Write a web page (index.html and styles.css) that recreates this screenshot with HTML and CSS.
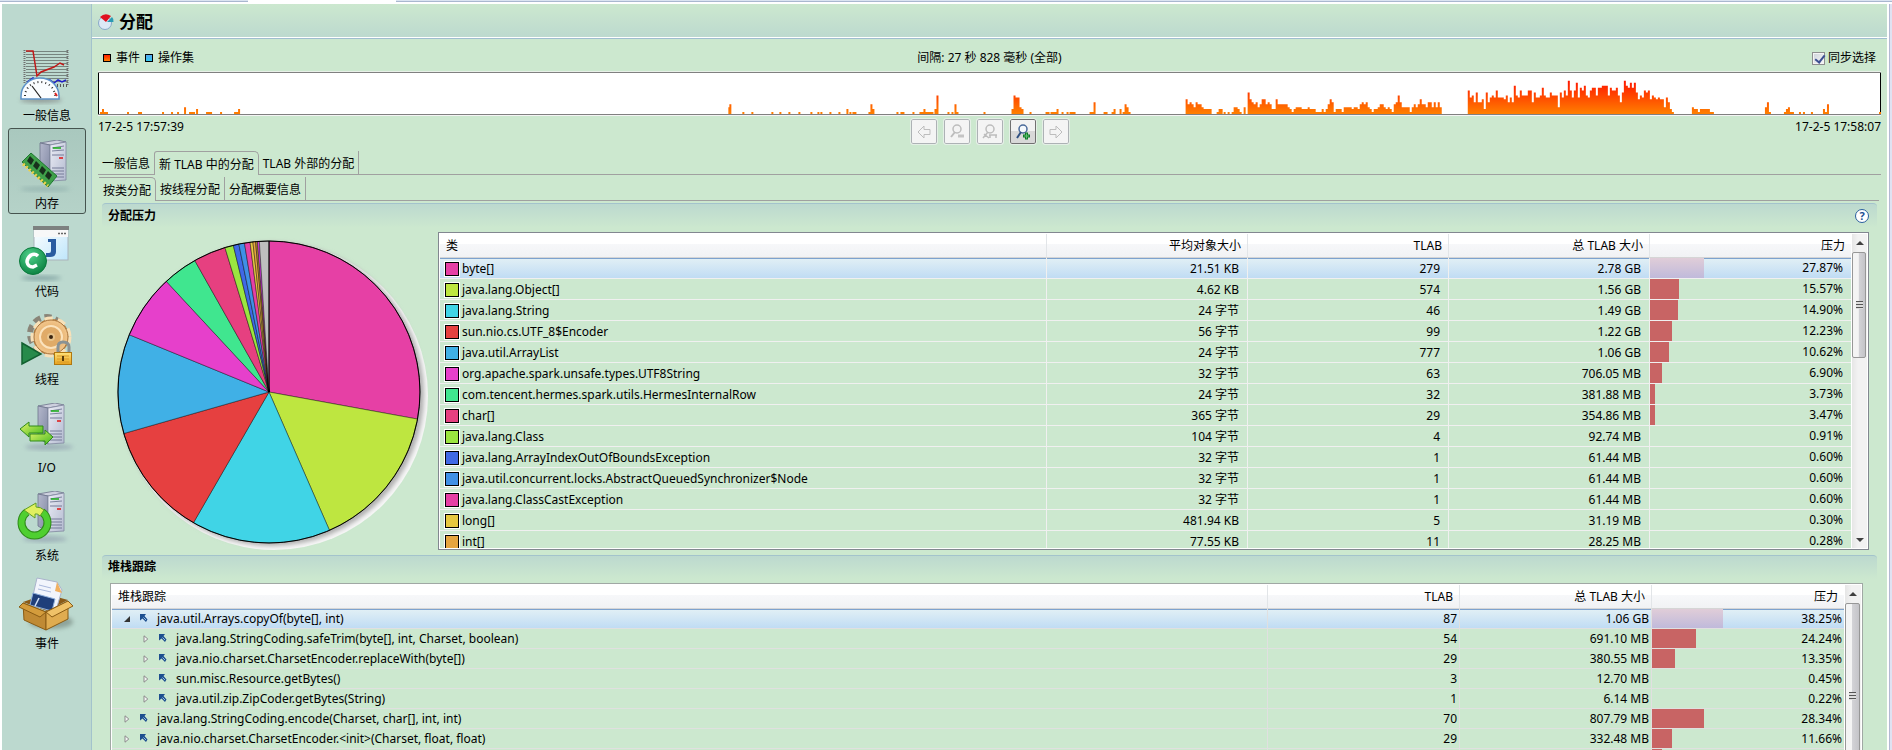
FILE: index.html
```html
<!DOCTYPE html>
<html lang="zh-CN">
<head>
    <meta charset="UTF-8">
    <meta name="viewport" content="width=device-width, initial-scale=1.0">
    <title>分配</title>
    <link rel="stylesheet" href="styles.css">
</head>
<body>

<!-- Shared icon parts -->
<svg class="defs" width="0" height="0" aria-hidden="true">
    <defs>
        <linearGradient id="side" x1="0" y1="0" x2="1" y2="1">
            <stop offset="0" stop-color="#b4b8cc"/><stop offset="1" stop-color="#7f86a2"/>
        </linearGradient>
        <linearGradient id="front" x1="0" y1="0" x2="1" y2="1">
            <stop offset="0" stop-color="#eceef6"/><stop offset="1" stop-color="#b3bad0"/>
        </linearGradient>
        <linearGradient id="lime" x1="0" y1="0" x2="1" y2="1">
            <stop offset="0" stop-color="#e4f56a"/><stop offset="1" stop-color="#3fb81e"/>
        </linearGradient>
        <radialGradient id="ball" cx="0.4" cy="0.3" r="0.8">
            <stop offset="0" stop-color="#4fd08a"/><stop offset="1" stop-color="#047a3a"/>
        </radialGradient>
        <linearGradient id="gold" x1="0" y1="0" x2="0" y2="1">
            <stop offset="0" stop-color="#ffe27a"/><stop offset="1" stop-color="#e8a21c"/>
        </linearGradient>
        <radialGradient id="gear" cx="0.5" cy="0.5" r="0.6">
            <stop offset="0" stop-color="#d99a50"/><stop offset="1" stop-color="#f7cf98"/>
        </radialGradient>
        <linearGradient id="sky" x1="0" y1="0" x2="1" y2="1">
            <stop offset="0" stop-color="#ffffff"/><stop offset="1" stop-color="#bfe6fb"/>
        </linearGradient>
        <filter id="soft" x="-30%" y="-30%" width="160%" height="160%"><feGaussianBlur stdDeviation="2"/></filter>
        <symbol id="server" viewBox="0 0 28 42">
            <path d="M1 3 L18 0 L27 2 L11 5 Z" fill="#cdd0de" stroke="#6d738c" stroke-width=".8"/>
            <path d="M1 3 L11 5 V41 L1 35 Z" fill="url(#side)" stroke="#6d738c" stroke-width=".8"/>
            <path d="M11 5 L27 2 V40 L11 41 Z" fill="url(#front)" stroke="#8288a0" stroke-width=".8"/>
            <path d="M13 8 L25 6 M13 11 L25 10" stroke="#7d849e"/>
            <path d="M14 8 h8" stroke="#22b022" stroke-width="1.6"/>
            <path d="M20 18 h4" stroke="#e02020" stroke-width="1.6"/>
            <path d="M13 15 h12 M13 28 h12 M13 31 h12 M13 34 h12 M13 37 h12" stroke="#747b98"/>
        </symbol>
        <symbol id="frame" viewBox="0 0 10 10">
            <path d="M1 0 H7 L5.500 2 L8.500 5.500 L7 8 L3.500 4.500 L1 6.500 Z" fill="#1d4f8f"/>
            <path d="M4.500 3.500 L7 6" stroke="#9fc0e4"/>
        </symbol>
        <symbol id="closed" viewBox="0 0 8 8">
            <path d="M2 .8 L5.8 4 L2 7.2 Z" fill="#f4f4f4" stroke="#8a8a8a"/>
        </symbol>
    </defs>
</svg>

<div class="top-strip"><div class="strip-left"></div><div class="strip-right"></div></div>

<div class="window">
    <nav class="sidebar">
        <button class="side-item">
            <svg width="56" height="56" viewBox="0 0 56 56">
                <path d="M7 1.5h42M7 4.5h42M7 7.500h42M7 10.500h42M7 13.500h42M7 16.500h42M7 19.500h42M7 22.500h42M7 25.500h42M7 28.500h42M7 31.500h42" stroke="#77857f"/>
                <path d="M48.500 0V36M5.500 0V34" stroke="#6f6f6f" stroke-width="2" stroke-dasharray="1 1"/>
                <path d="M32 35.500h16" stroke="#555" stroke-width="3" stroke-dasharray="1 2"/>
                <path d="M7 1 H14 L18 26 L22 22 L35 17 L41 13 L45 15" fill="none" stroke="#c01818" stroke-width="1.500"/>
                <path d="M8 32 L14 28 L19 31 L31 30 L35 33 L39 30 L43 32 L47 30" fill="none" stroke="#2020c8" stroke-width="1.500"/>
                <ellipse cx="22" cy="50" rx="21" ry="3" fill="#777" filter="url(#soft)" opacity=".6"/>
                <path d="M2 49 V46 A19 18 0 0 1 40 46 V49 Z" fill="#fafdff" stroke="#5d92c8" stroke-width="1.500"/>
                <path d="M6 46 A15 14 0 0 1 36 46" fill="none" stroke="#333" stroke-width="2" stroke-dasharray="1 3"/>
                <path d="M13 36 L22 48" stroke="#222" stroke-width="1.200"/>
                <path d="M36 43 L38 46" stroke="#d22" stroke-width="2"/>
            </svg>
            <span>一般信息</span>
        </button>
        <button class="side-item selected">
            <svg width="56" height="56" viewBox="0 0 56 56">
                <ellipse cx="26" cy="51" rx="25" ry="2" fill="#7fa0a0" filter="url(#soft)" opacity=".6"/>
                <use href="#server" x="20" y="2" width="28" height="42"/>
                <path d="M3 24 L12 15 L38 38 L29 49 Z" fill="#3fa04a" stroke="#1f7a30"/>
                <path d="M11 18l4 4-3 5-4-4zM17 23l4 4-3 5-4-4zM23 28l4 4-3 5-4-4zM29 33l4 4-3 5-4-4z" fill="#18301c"/>
                <path d="M4 26 L29 48" stroke="#ecd24a" stroke-width="3" stroke-dasharray="2 2"/>
            </svg>
            <span>内存</span>
        </button>
        <button class="side-item">
            <svg width="56" height="56" viewBox="0 0 56 56">
                <ellipse cx="22" cy="52" rx="20" ry="2" fill="#7fa0a0" filter="url(#soft)"/>
                <rect x="15" y="1" width="34" height="33" fill="url(#sky)" stroke="#a9b4bb"/>
                <rect x="14" y="0" width="36" height="4" fill="#7d8180"/>
                <rect x="15" y="4" width="34" height="7" fill="#f8f8f8"/>
                <path d="M39 7.500h8" stroke="#666" stroke-width="1.500" stroke-dasharray="2 1"/>
                <path d="M29 13 H37 V26 Q37 31 31 31 H27 V27 H30 Q32 27 32 25 V16 H29 Z" fill="#2a5ba0"/>
                <circle cx="14" cy="35" r="13.500" fill="url(#ball)" stroke="#0a7a3c"/>
                <path d="M19 30 Q16 27 12 29 Q8 32 8 36 Q9 41 14 41 L18 39" fill="none" stroke="#fff" stroke-width="3.500"/>
            </svg>
            <span>代码</span>
        </button>
        <button class="side-item">
            <svg width="56" height="56" viewBox="0 0 56 56">
                <circle cx="28" cy="20" r="17" fill="none" stroke="#8a8578" stroke-width="6" stroke-dasharray="7 4"/>
                <circle cx="32" cy="23" r="18" fill="#b98345" stroke="#f7e0b8" stroke-width="5" stroke-dasharray="8 5"/>
                <circle cx="32" cy="23" r="17" fill="url(#gear)" stroke="#a8733a"/>
                <circle cx="32" cy="23" r="11" fill="#e0ab68" stroke="#fbe3bd" stroke-width="2"/>
                <circle cx="32" cy="23" r="3" fill="#3a2410" stroke="#e8c48c" stroke-width="2"/>
                <path d="M3 29 L22 40 L3 50 Z" fill="#278a4a" stroke="#126030" stroke-width="1.500"/>
                <path d="M39 40 V33 Q39 28 44 28 Q50 28 50 33 V40" fill="none" stroke="#8a9294" stroke-width="3"/>
                <rect x="35.500" y="38.500" width="17" height="12" fill="url(#gold)" stroke="#b07810"/>
                <path d="M38 42h12M38 45h12M38 48h12" stroke="#d89a28"/>
                <path d="M44 42v5" stroke="#5a3c08" stroke-width="2"/>
            </svg>
            <span>线程</span>
        </button>
        <button class="side-item">
            <svg width="56" height="56" viewBox="0 0 56 56">
                <ellipse cx="30" cy="45" rx="24" ry="3" fill="#8894a8" filter="url(#soft)" opacity=".6"/>
                <use href="#server" x="18" y="1" width="28" height="42"/>
                <path d="M1 27 L10 20 V24 H24 V31 H10 V35 Z" fill="url(#lime)" stroke="#2f8a1a"/>
                <path d="M34 35 L26 28 V32 H11 V39 H26 V43 Z" fill="url(#lime)" stroke="#2f8a1a"/>
            </svg>
            <span>I/O</span>
        </button>
        <button class="side-item">
            <svg width="56" height="56" viewBox="0 0 56 56">
                <ellipse cx="26" cy="49" rx="22" ry="3" fill="#8894a8" filter="url(#soft)" opacity=".6"/>
                <use href="#server" x="18" y="1" width="28" height="42"/>
                <path d="M8 22 A13 13 0 1 0 23 22" fill="none" stroke="#2f8a1a" stroke-width="8"/>
                <path d="M8 22 A13 13 0 1 0 23 22" fill="none" stroke="#4fcf30" stroke-width="6"/>
                <path d="M5 20 L17 13 V17 Q22 17 25 20 L21 26 Q18 23 16 24 V28 Z" fill="#e0f060" stroke="#5fa020"/>
            </svg>
            <span>系统</span>
        </button>
        <button class="side-item">
            <svg width="56" height="56" viewBox="0 0 56 56">
                <ellipse cx="32" cy="44" rx="22" ry="7" fill="#6f8078" filter="url(#soft)" opacity=".6"/>
                <path d="M4 24 L27 16 L49 22 L28 33 Z" fill="#8a5a18"/>
                <path d="M18 0 L38 4 L43 12 L37 32 L12 26 Z" fill="#f2f5fc" stroke="#aab4cc"/>
                <path d="M38 4 L36 13 L43 15 Z" fill="#f0b060"/>
                <path d="M20 7l12 3M19 11l13 3" stroke="#a9b8dc"/>
                <path d="M14 15 L36 21 L33 33 L11 27 Z" fill="#1f3f7a" stroke="#8fb0dc"/>
                <path d="M16 28 L20 20" stroke="#cfe0f6" stroke-width="1.500"/>
                <path d="M4 25 L27 34 V52 L5 42 Z" fill="#c08a34" stroke="#8a5c14"/>
                <path d="M27 34 L49 23 V41 L27 52 Z" fill="#e0ac50" stroke="#8a5c14"/>
                <path d="M4 25 L27 34 L21 39 L0 29 Z" fill="#d49c3c" stroke="#8a5c14"/>
                <path d="M27 34 L49 23 L54 28 L33 39 Z" fill="#f0c268" stroke="#8a5c14"/>
            </svg>
            <span>事件</span>
        </button>
    </nav>

    <main class="main">
        <header class="title-bar">
            <svg width="16" height="16" viewBox="0 0 16 16">
                <circle cx="7" cy="9" r="6.500" fill="#dce9f6" stroke="#88a8c8"/>
                <path d="M8 8 L2 3 Q7 -2 13 2 Z" fill="#e01020"/>
                <path d="M9 8 L14 3 Q16 5 15.500 8 Z" fill="#2a9ab4"/>
            </svg>
            <h1>分配</h1>
        </header>

        <div class="content">
            <div class="legend">
                <div class="legend-keys">
                    <span class="key events"></span>事件
                    <span class="key operations"></span>操作集
                </div>
                <div class="interval">间隔: 27 秒 828 毫秒 (全部)</div>
                <label class="sync"><input type="checkbox" checked>同步选择</label>
            </div>

            <div class="timeline">
                <svg id="timeline" viewBox="0 0 1782 42" preserveAspectRatio="none">
                    <defs>
                        <linearGradient id="heat" gradientUnits="userSpaceOnUse" x1="0" y1="6" x2="0" y2="42">
                            <stop offset="0" stop-color="#ff1000"/><stop offset="1" stop-color="#ff8000"/>
                        </linearGradient>
                    </defs>
                    <path id="timelineBars" fill="url(#heat)"/>
                </svg>
            </div>

            <div class="range">
                <span>17-2-5 17:57:39</span>
                <div class="zoom-buttons">
                    <button disabled aria-label="后退"><svg width="16" height="16" viewBox="0 0 16 16"><path d="M2 8 L8 2 V5.500 H14 V10.500 H8 V14 Z" fill="none" stroke="#bdbdbd"/></svg></button>
                    <button disabled aria-label="缩小"><svg width="16" height="16" viewBox="0 0 16 16"><circle cx="8" cy="5" r="4" fill="none" stroke="#bdbdbd" stroke-width="1.500"/><path d="M6 8 L2 13" stroke="#bdbdbd" stroke-width="2"/><path d="M9 12 h6" stroke="#c4c4c4" stroke-width="3"/></svg></button>
                    <button disabled aria-label="缩放选区"><svg width="16" height="16" viewBox="0 0 16 16"><circle cx="8" cy="5" r="4" fill="none" stroke="#bdbdbd" stroke-width="1.500"/><path d="M6 8 L1 14 M2 10 L7 14 M7 11 H15 M8 14 V11 M14 14 V11" fill="none" stroke="#bdbdbd" stroke-width="1.500"/></svg></button>
                    <button class="enabled" aria-label="放大"><svg width="16" height="16" viewBox="0 0 16 16"><circle cx="8" cy="5" r="4" fill="#f4f8fc" stroke="#4a6a9a" stroke-width="1.500"/><path d="M6 8 L2 14" stroke="#2f4f80" stroke-width="2"/><path d="M11.500 8.500 v7 M8 12 h7" stroke="#0f7a28" stroke-width="3"/><path d="M11.500 9.500 v5 M9 12 h5" stroke="#5fc070"/></svg></button>
                    <button disabled aria-label="前进"><svg width="16" height="16" viewBox="0 0 16 16"><path d="M14 8 L8 2 V5.500 H2 V10.500 H8 V14 Z" fill="none" stroke="#bdbdbd"/></svg></button>
                </div>
                <span>17-2-5 17:58:07</span>
            </div>

            <div class="tabs">
                <button class="tab first">一般信息</button>
                <button class="tab active">新 TLAB 中的分配</button>
                <button class="tab">TLAB 外部的分配</button>
                <div class="tab-fill"></div>
            </div>
            <div class="tabs inner">
                <button class="tab first active">按类分配</button>
                <button class="tab">按线程分配</button>
                <button class="tab">分配概要信息</button>
                <div class="tab-fill"></div>
            </div>

            <section class="section">
                <div class="section-head">
                    <h2>分配压力</h2>
                    <button class="help" aria-label="帮助">?</button>
                </div>
                <div class="pressure">
                    <svg id="pie" class="pie" width="320" height="318" viewBox="0 0 320 318">
                        <circle cx="156" cy="164" r="154" fill="#f6f6f6"/>
                        <circle cx="154" cy="162" r="152" fill="#b0b0b0" filter="url(#soft)"/>
                        <g id="slices" stroke="#000" stroke-opacity=".5" stroke-width=".8"></g>
                        <circle cx="151" cy="160" r="151" fill="none" stroke="#000"/>
                        <path d="M151 9 V160" stroke="#000"/>
                    </svg>
                    <div class="table-box classes">
                        <div class="table-view">
                            <table>
                                <colgroup><col><col class="num-col"><col class="num-col"><col class="num-col"><col class="num-col"></colgroup>
                                <thead>
                                    <tr><th>类</th><th>平均对象大小</th><th>TLAB</th><th>总 TLAB 大小</th><th>压力</th></tr>
                                </thead>
                                <tbody id="classRows"></tbody>
                            </table>
                        </div>
                        <div class="scrollbar">
                            <button class="arrow up" aria-label="向上"></button>
                            <div class="thumb"></div>
                            <button class="arrow down" aria-label="向下"></button>
                        </div>
                    </div>
                </div>
            </section>

            <section class="section">
                <div class="section-head short">
                    <h2>堆栈跟踪</h2>
                </div>
                <div class="table-box traces">
                    <div class="table-view">
                        <table>
                            <colgroup><col><col class="num-col"><col class="num-col"><col class="num-col"></colgroup>
                            <thead>
                                <tr><th>堆栈跟踪</th><th>TLAB</th><th>总 TLAB 大小</th><th>压力</th></tr>
                            </thead>
                            <tbody id="traceRows"></tbody>
                        </table>
                    </div>
                    <div class="scrollbar">
                        <button class="arrow up" aria-label="向上"></button>
                        <div class="thumb"></div>
                    </div>
                </div>
            </section>
        </div>
    </main>
    <div class="window-edge"></div>
</div>

<script src="script.js"></script>
</body>
</html>
```

FILE: styles.css
```css
* {
    box-sizing: border-box;
}
body {
    margin: 0;
    height: 100vh;
    overflow: hidden;
    display: flex;
    flex-direction: column;
    background-color: #fff;
    color: #000;
    font-family: "Noto Sans", "Noto Sans CJK SC", sans-serif;
    font-size: 12px;
    line-height: 16px;
}
button {
    font: inherit;
    color: inherit;
    background: none;
    border: none;
    padding: 0;
}
.defs {
    position: absolute;
}
.top-strip {
    display: flex;
    flex: none;
    height: 4px;
    gap: 148px;
}
.strip-left, .strip-right {
    height: 2px;
    background-color: #dbe4f1;
    border-bottom: 1px solid #a9b7cf;
}
.strip-left {
    width: 248px;
}
.strip-right {
    flex: 1;
}
.window {
    flex: 1;
    min-height: 0;
    overflow: hidden;
    display: flex;
    padding-left: 2px;
}
.window-edge {
    width: 5px;
    border-left: 2px solid #fff;
    background-color: #dfe2f2;
    box-shadow: inset 1px 0 #b3b9d3;
}

/* Left navigation */
.sidebar {
    flex: none;
    width: 90px;
    padding: 36px 5px 0 6px;
    background-color: #bcd9cf;
    border-right: 1px solid #a3c3cc;
    display: flex;
    flex-direction: column;
    gap: 2px;
}
.side-item {
    height: 86px;
    padding-top: 9px;
    border: 1px solid transparent;
    border-radius: 3px;
    display: flex;
    flex-direction: column;
    align-items: center;
    gap: 2px;
}
.side-item svg {
    overflow: visible;
}
.side-item.selected {
    background: linear-gradient(#a9c8be, #b5d2c8);
    border-color: #46544f;
}

/* Title and timeline */
.main {
    flex: 1;
    min-width: 0;
    overflow: hidden;
    background-color: #cce8cf;
}
.title-bar {
    height: 35px;
    padding: 2px 6px 0;
    display: flex;
    align-items: center;
    gap: 5px;
    background: linear-gradient(#cce8cf, #bcd9cf);
    border-bottom: 1px solid #9fbdd0;
    box-shadow: inset 0 -1px #fff;
}
.title-bar h1 {
    margin: 0;
    font-size: 17px;
    line-height: 24px;
}
.content {
    padding: 0 6px;
}
.legend {
    height: 32px;
    padding: 6px 5px 0;
    display: grid;
    grid-template-columns: 1fr auto 1fr;
    align-items: center;
}
.legend-keys {
    display: flex;
    align-items: center;
    gap: 5px;
}
.key {
    width: 8px;
    height: 8px;
    border: 1px solid #000;
}
.events {
    background: linear-gradient(#ff2000, #ff8000);
}
.operations {
    background: linear-gradient(#58a8f0, #30c8f0);
}
.sync {
    justify-self: end;
    display: flex;
    align-items: center;
    gap: 3px;
}
.sync input {
    appearance: none;
    width: 13px;
    height: 13px;
    margin: 0;
    border: 1px solid #8e8f8f;
    background: linear-gradient(135deg, #cdd3da, #f8f8f8);
    box-shadow: inset 0 0 0 1px #f4f4f4;
}
.sync input:checked::after {
    content: "";
    display: block;
    width: 4px;
    height: 8px;
    margin: 0 0 0 4px;
    border: solid #3c4f91;
    border-width: 0 2px 2px 0;
    transform: rotate(38deg);
}
.timeline {
    height: 45px;
    border-top: 1px solid #e8f0e8;
    border-bottom: 1px solid #f4f4f4;
}
.timeline svg {
    display: block;
    width: 100%;
    height: 43px;
    background-color: #fff;
    border: solid #808080;
    border-width: 1px 0;
    box-shadow: inset 1px 0 #000, inset -1px 0 #000;
}
.range {
    height: 35px;
    padding-top: 2px;
    display: flex;
    justify-content: space-between;
}
.range > span {
    padding-top: 1px;
}
.zoom-buttons {
    display: flex;
    gap: 5px;
}
.zoom-buttons button {
    width: 28px;
    height: 27px;
    display: flex;
    align-items: center;
    justify-content: center;
    background-color: #f4f4f4;
    border: 1px solid #e4efe6;
    border-radius: 3px;
    box-shadow: inset 0 0 0 1px #adb2b5;
}
.zoom-buttons .enabled {
    background: linear-gradient(#f2f2f2 50%, #d8d8d8 50%);
    box-shadow: inset 0 0 0 1px #707070;
}

/* Tabs */
.tabs {
    display: flex;
    height: 24px;
    margin-bottom: 2px;
}
.tabs.inner {
    margin: 0 2px 2px 1px;
}
.tab {
    padding: 2px 4px 0;
    border: solid #a0a0a0;
    border-width: 0 1px 1px 0;
}
.tab.first {
    border-right-width: 0;
}
.tab.active {
    border-width: 1px 1px 0;
    border-radius: 3px 5px 0 0;
}
.tab.first.active {
    border-left-width: 0;
    border-radius: 0 5px 0 0;
}
.tab-fill {
    flex: 1;
    border-bottom: 1px solid #a0a0a0;
}

/* Sections */
.section {
    margin: 0 4px 5px;
}
.section-head {
    height: 29px;
    padding: 0 8px 5px 6px;
    display: flex;
    align-items: center;
    justify-content: space-between;
    background: linear-gradient(#bcd9cf, #cce8cf 85%);
    border-top: 1px solid #a3c3cc;
    border-radius: 4px 4px 0 0;
}
.section-head.short {
    height: 28px;
}
.section-head h2 {
    margin: 0;
    font-size: 12px;
    line-height: 16px;
}
.help {
    width: 14px;
    height: 14px;
    border: 1px solid #2a5f9e;
    border-radius: 50%;
    background-color: #fff;
    color: #1c4f92;
    font-size: 11px;
    font-weight: bold;
    line-height: 12px;
}
.pressure {
    display: flex;
    height: 318px;
    padding: 0 8px 0 16px;
}
.pie {
    flex: none;
    overflow: visible;
}

/* Tables */
.table-box {
    flex: 1;
    min-width: 0;
    display: flex;
    padding: 1px;
    background-color: #fff;
    border: 1px solid #828790;
}
.table-view {
    flex: 1;
    min-width: 0;
    overflow: hidden;
    background-color: #cce8cf;
}
table {
    width: 100%;
    table-layout: fixed;
    border-collapse: separate;
    border-spacing: 0;
}
.classes .num-col {
    width: 201px;
}
.traces .num-col {
    width: 192px;
}
th {
    height: 24px;
    padding: 0 6px;
    text-align: right;
    font-weight: normal;
    background: linear-gradient(#fff 42%, #f7f8fa 42%, #f1f2f4);
    border-right: 1px solid #e2e5e8;
    border-bottom: 1px solid #d5d5d5;
}
th:first-child, td:first-child {
    text-align: left;
}
td {
    height: 21px;
    padding: 1px 8px 0;
    text-align: right;
    white-space: nowrap;
    border-right: 1px solid #f0f0f0;
    border-bottom: 1px solid #f0f0f0;
}
.traces td {
    height: 20px;
    padding: 1px 2px 0;
    border-color: #e0e0e0;
}
td:last-child, th:last-child {
    border-right: none;
}
td:last-child, .traces td:last-child {
    padding-top: 0;
}
.selected td {
    background: linear-gradient(#e2f0f5, #c0dcf4);
    box-shadow: inset 0 1px #7da2ce;
}
.class-name, .trace-name {
    display: flex;
    align-items: center;
}
.class-name {
    gap: 2px;
    margin-left: -4px;
}
.swatch {
    width: 16px;
    height: 16px;
    border: 1px solid #fff;
    box-shadow: inset 0 0 0 1px #000;
}
.trace-name {
    gap: 8px;
    padding-left: 9px;
}
.trace-name.child {
    padding-left: 28px;
}
.meter {
    display: flex;
    align-items: center;
    justify-content: space-between;
    margin-left: -8px;
    height: 20px;
}
.traces .meter {
    height: 19px;
    margin-left: -2px;
}
.bar {
    height: 100%;
    background-color: #c86464;
}
.selected .bar {
    background: linear-gradient(#e0cdd8, #c0badb);
}

/* Scrollbars */
.scrollbar {
    flex: none;
    width: 17px;
    display: flex;
    flex-direction: column;
    background: linear-gradient(90deg, #e6e6e6, #f2f2f2 40%);
    border-left: 1px solid #fff;
}
.classes .scrollbar {
    width: 16px;
}
.arrow {
    height: 17px;
    display: flex;
    align-items: center;
    justify-content: center;
}
.arrow::before {
    content: "";
    border: 4px solid transparent;
}
.up::before {
    border-bottom-color: #404040;
    border-top: none;
}
.down::before {
    border-top-color: #404040;
    border-bottom: none;
}
.down {
    margin-top: auto;
}
.thumb {
    height: 106px;
    margin: 1px 1px 0 0;
    display: flex;
    align-items: center;
    justify-content: center;
    background: linear-gradient(90deg, #f4f4f4 45%, #d2d2d6 50%, #c4c4c8);
    border: 1px solid #979797;
    border-radius: 2px;
}
.thumb::before {
    content: "";
    width: 7px;
    height: 8px;
    background: repeating-linear-gradient(#555 0 1px, #ddd 1px 3px);
}
.traces {
    margin: 0 14px 0 8px;
    border-color: #a0a8a4;
}
.traces .thumb {
    height: 186px;
}
```

FILE: script.js
```js
const classes = [
    ["byte[]", "21.51 KB", "279", "2.78 GB", 27.87, "#e640a5", 54],
    ["java.lang.Object[]", "4.62 KB", "574", "1.56 GB", 15.57, "#bee640", 29],
    ["java.lang.String", "24 字节", "46", "1.49 GB", 14.90, "#40d4e6", 28],
    ["sun.nio.cs.UTF_8$Encoder", "56 字节", "99", "1.22 GB", 12.23, "#e64040", 22],
    ["java.util.ArrayList", "24 字节", "777", "1.06 GB", 10.62, "#40b0e6", 19],
    ["org.apache.spark.unsafe.types.UTF8String", "32 字节", "63", "706.05 MB", 6.90, "#e640cb", 12],
    ["com.tencent.hermes.spark.utils.HermesInternalRow", "24 字节", "32", "381.88 MB", 3.73, "#40e68f", 5],
    ["char[]", "365 字节", "29", "354.86 MB", 3.47, "#e64080", 5],
    ["java.lang.Class", "104 字节", "4", "92.74 MB", 0.91, "#9be640", 0],
    ["java.lang.ArrayIndexOutOfBoundsException", "32 字节", "1", "61.44 MB", 0.60, "#4069e6", 0],
    ["java.util.concurrent.locks.AbstractQueuedSynchronizer$Node", "32 字节", "1", "61.44 MB", 0.60, "#4090e6", 0],
    ["java.lang.ClassCastException", "32 字节", "1", "61.44 MB", 0.60, "#e640a5", 0],
    ["long[]", "481.94 KB", "5", "31.19 MB", 0.30, "#e6c840", 0],
    ["int[]", "77.55 KB", "11", "28.25 MB", 0.28, "#e6a540", 0]
];

// level, method, TLABs, size, pressure, bar width
const traces = [
    [0, "java.util.Arrays.copyOf(byte[], int)", "87", "1.06 GB", "38.25%", 71],
    [1, "java.lang.StringCoding.safeTrim(byte[], int, Charset, boolean)", "54", "691.10 MB", "24.24%", 44],
    [1, "java.nio.charset.CharsetEncoder.replaceWith(byte[])", "29", "380.55 MB", "13.35%", 23],
    [1, "sun.misc.Resource.getBytes()", "3", "12.70 MB", "0.45%", 0],
    [1, "java.util.zip.ZipCoder.getBytes(String)", "1", "6.14 MB", "0.22%", 0],
    [0, "java.lang.StringCoding.encode(Charset, char[], int, int)", "70", "807.79 MB", "28.34%", 52],
    [0, "java.nio.charset.CharsetEncoder.<init>(Charset, float, float)", "29", "332.48 MB", "11.66%", 20],
    [0, "", "", "", "", 10]
];

// start x and one base-36 level for every 2px column
const runs = [
    [2, "1211"], [29, "1"], [40, "11"], [64, "1"], [73, "1"], [79, "1"], [86, "3"], [91, "11"], [95, "1"],
    [98, "2"], [108, "111"], [122, "1"], [136, "11"], [140, "2"],
    [630, "3"], [631, "4"], [644, "1"], [653, "1"], [673, "1"], [681, "1"], [690, "1"], [700, "1"],
    [712, "1"], [719, "1"], [722, "1"], [731, "1"], [740, "1"], [748, "2"], [751, "1"], [754, "11"],
    [770, "142"], [798, "1"], [802, "11"], [814, "1"], [821, "1121111"], [836, "28"], [849, "1"],
    [853, "1"], [856, "41"], [885, "1"], [913, "287732"], [931, "1"], [947, "11"], [952, "1112"],
    [963, "1"], [968, "1"], [971, "111"], [991, "115"], [1005, "11"], [1013, "12"], [1021, "2"],
    [1024, "1431"], [1087, "6454354432222"], [1118, "122"], [1125, "1"], [1129, "1"], [1133, "13321"],
    [1145, "3"],
    [1149, "9654534664542264444432123332223222111212465122213333233245453212234432321458533331343464435535353"],
    [1369, "a7859556295787a77768575c87a888aa59778b877988839"],
    [1463, "7a8ea7ad7bac87abb8bbccc8baab859ecbdbd9687a9a687676637521"],
    [1593, "32212222211"], [1666, "351"], [1685, "123"], [1691, "11"], [1700, "1"], [1704, "1"],
    [1712, "1"], [1724, "21"], [1728, "4"], [1780, "1"]
];

function drawTimeline() {
    let d = "";
    runs.forEach(([start, levels]) => {
        [...levels].forEach((level, i) => {
            const height = Math.round(parseInt(level, 36) * 2.43);
            d += `M${start + i * 2} 42v-${height}h2v${height}z`;
        });
    });
    document.getElementById("timelineBars").setAttribute("d", d);
}

function drawPie() {
    const parts = classes.map(row => [row[4], row[5]]);
    parts.push([0.2, "#b48830"], [0.2, "#d840e6"], [1.02, "#bebebe"]);
    let angle = 0;
    let slices = "";
    parts.forEach(([percent, color]) => {
        const end = angle + percent / 100 * 2 * Math.PI;
        const point = a => `${(151 + 151 * Math.sin(a)).toFixed(2)} ${(160 - 151 * Math.cos(a)).toFixed(2)}`;
        slices += `<path d="M151 160L${point(angle)}A151 151 0 0 1 ${point(end)}Z" fill="${color}"/>`;
        angle = end;
    });
    document.getElementById("slices").innerHTML = slices;
}

function meter(width, text) {
    return `<div class="meter"><div class="bar" style="width: ${width}px"></div>${text}</div>`;
}

function fillTables() {
    document.getElementById("classRows").innerHTML = classes.map((row, i) => `
        <tr class="${i === 0 ? "selected" : ""}">
            <td><div class="class-name"><span class="swatch" style="background-color: ${row[5]}"></span>${row[0]}</div></td>
            <td>${row[1]}</td><td>${row[2]}</td><td>${row[3]}</td>
            <td>${meter(row[6], row[4].toFixed(2) + "%")}</td>
        </tr>`).join("");

    document.getElementById("traceRows").innerHTML = traces.map((row, i) => {
        const arrow = i === 0
            ? '<svg width="8" height="8" viewBox="0 0 8 8"><path d="M7 1V7H1Z" fill="#333"/></svg>'
            : '<svg width="8" height="8"><use href="#closed"/></svg>';
        const icon = '<svg width="10" height="10"><use href="#frame"/></svg>';
        const name = row[1].replace("<", "&lt;").replace(">", "&gt;");
        return `
        <tr class="${i === 0 ? "selected" : ""}">
            <td><div class="trace-name ${row[0] ? "child" : ""}">${arrow}${icon}${name}</div></td>
            <td>${row[2]}</td><td>${row[3]}</td>
            <td>${meter(row[5], row[4])}</td>
        </tr>`;
    }).join("");
}

drawTimeline();
drawPie();
fillTables();
```
